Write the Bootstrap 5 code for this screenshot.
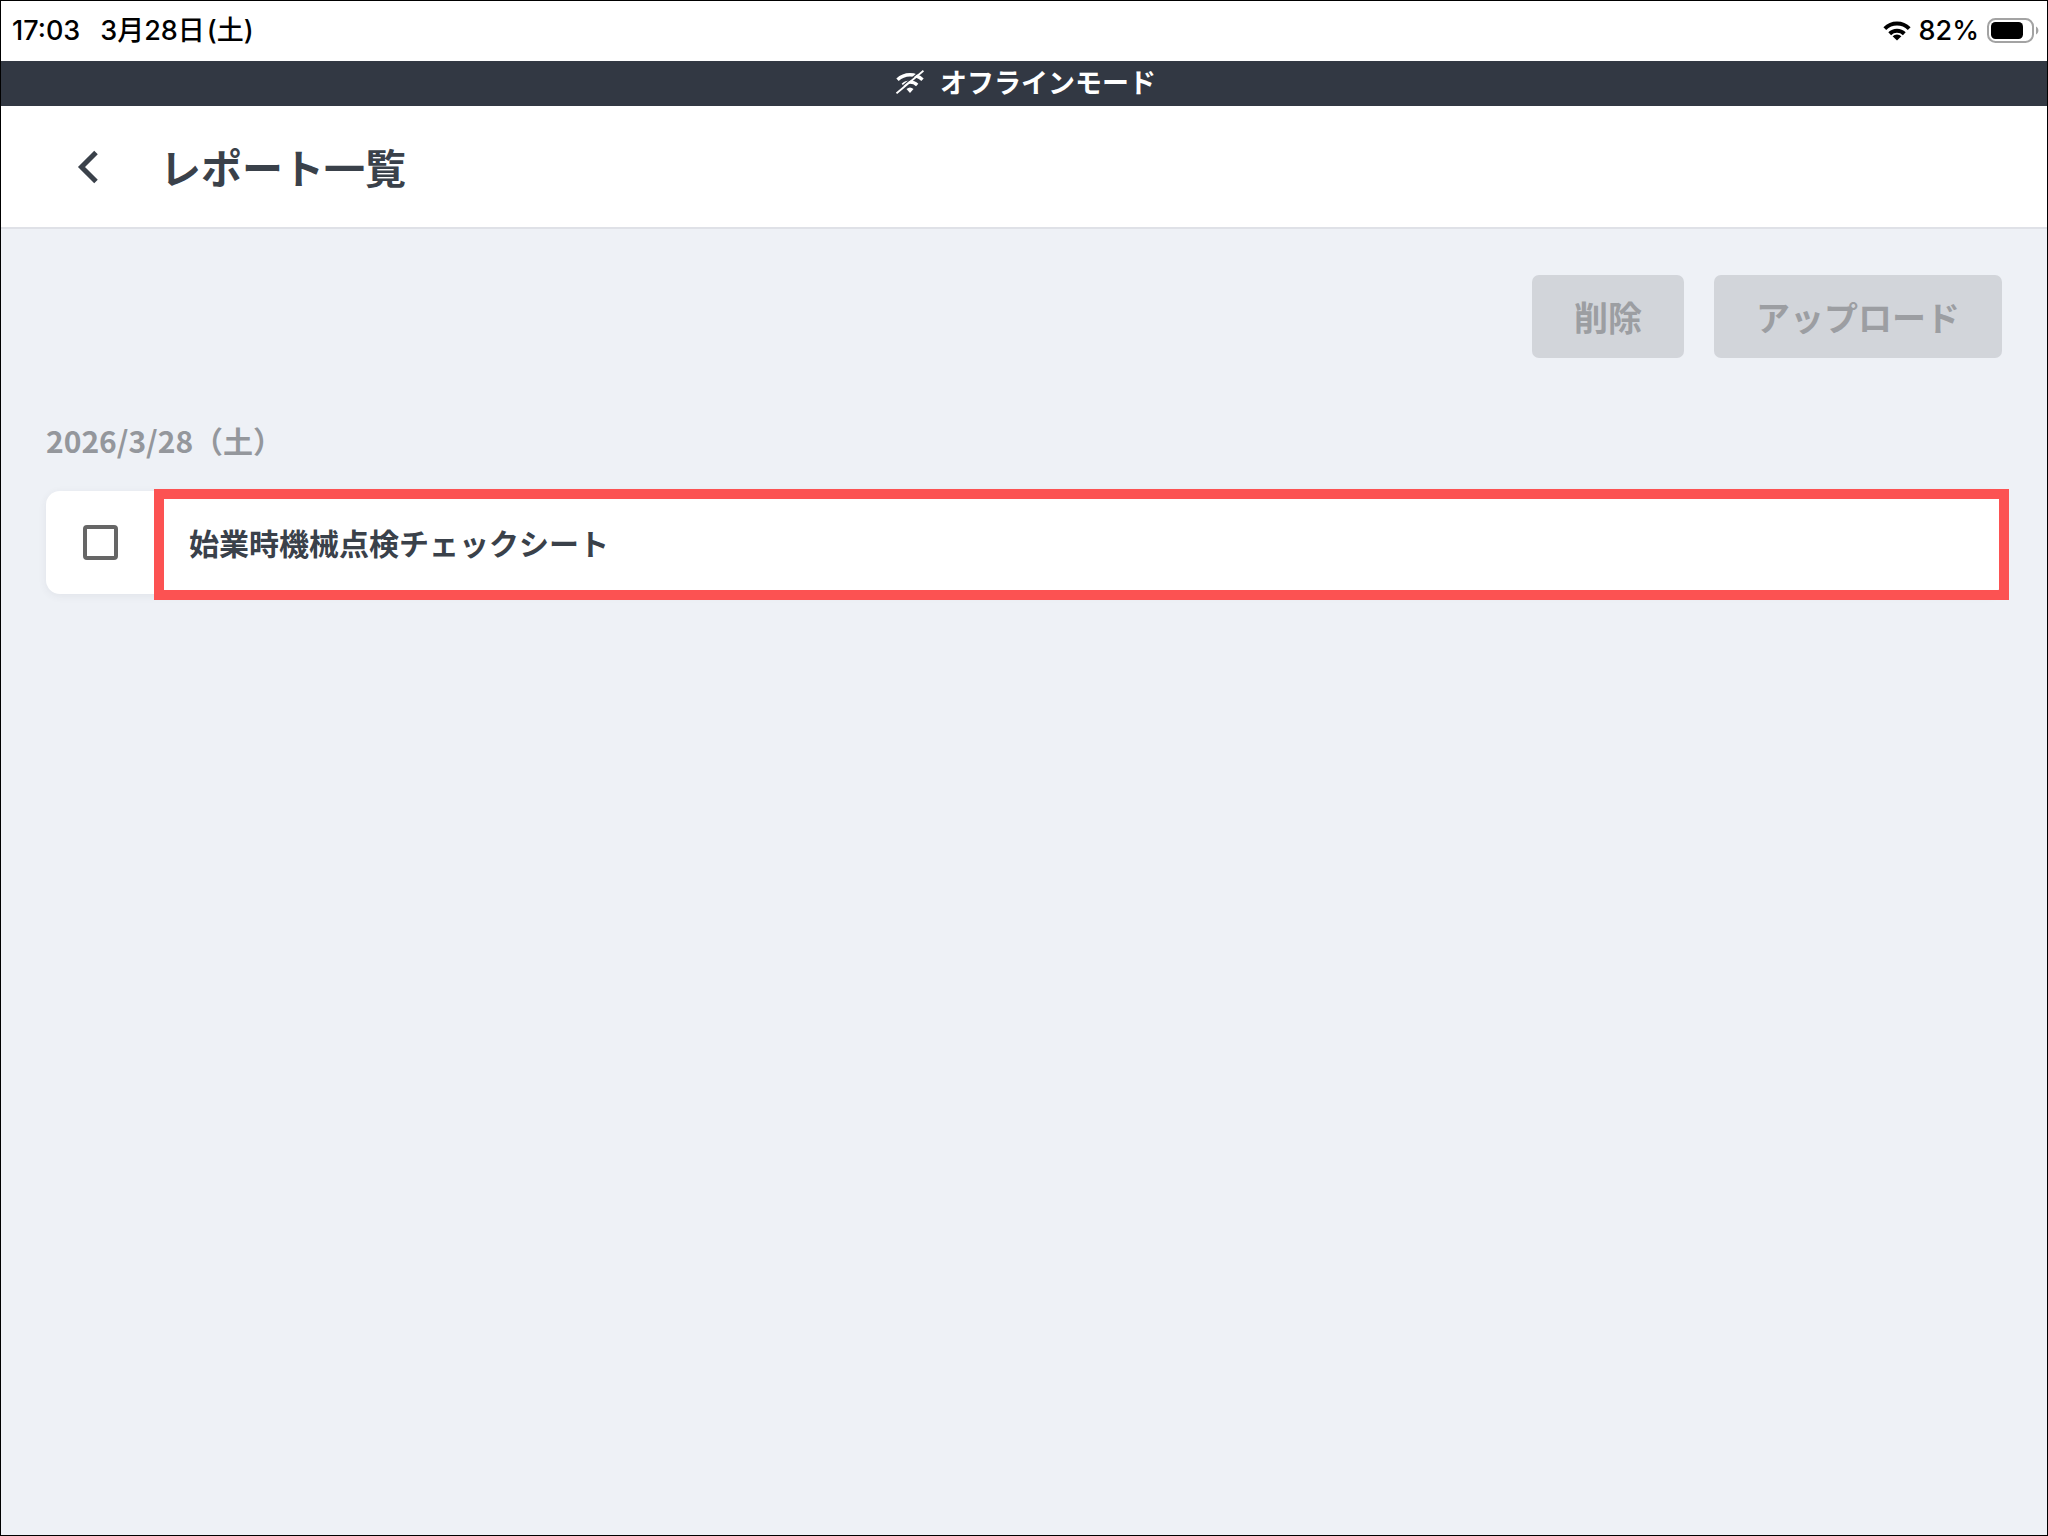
<!DOCTYPE html>
<html lang="ja">
<head>
<meta charset="utf-8">
<meta name="viewport" content="width=device-width, initial-scale=1">
<title>レポート一覧</title>
<link href="https://cdn.jsdelivr.net/npm/bootstrap@5.3.0/dist/css/bootstrap.min.css" rel="stylesheet">
<style>
  body { font-family: "Noto Sans CJK JP", sans-serif; background: #eef1f6; color: #3a414a; }
  .app-frame { border: 1px solid #000; }
  .status-bar { height: 60px; padding: 0 8px 0 11px; background: #fff; font-family: Inter, "Noto Sans CJK JP", sans-serif; font-size: 27px; font-weight: 500; line-height: 32px; color: #000; }
  .status-time { gap: 20px; }
  .status-date { gap: 2px; }
  .status-power { gap: 8px; }
  .offline-bar { height: 45px; padding: 0 0 4px 4px; gap: 16px; background: #323843; color: #fff; font-size: 27px; font-weight: 700; line-height: 40px; }
  .page-head { height: 123px; padding: 0 44px 0 63px; gap: 48px; background: #fff; border-bottom: 2px solid #dfe1e7; }
  .page-title { padding-bottom: 2px; font-size: 41px; font-weight: 700; line-height: 60px; }
  .back-btn { width: 48px; height: 48px; color: #3a414a; }
  .page-body { padding: 46px 45px; }
  .action-row { gap: 30px; }
  .btn-action { --bs-btn-padding-x: 42px; --bs-btn-padding-y: 0; --bs-btn-font-size: 34px; --bs-btn-font-weight: 700; --bs-btn-border-width: 0; --bs-btn-border-radius: 7px; --bs-btn-disabled-bg: #d2d5da; --bs-btn-disabled-color: #9c9ea2; --bs-btn-disabled-opacity: 1; height: 83px; }
  .date-label { margin: 58px 0 27px; font-size: 30px; font-weight: 700; line-height: 48px; color: #94979c; }
  .report-item { height: 103px; border-radius: 14px; background: #fff; box-shadow: 0 2px 8px rgba(50, 56, 67, .07); }
  .check-cell { width: 109px; }
  .form-check-input.report-check { width: 35px; height: 35px; border: 4px solid #666; border-radius: 4px; }
  .report-name { padding: 0 0 2px 34px; font-size: 30px; font-weight: 700; line-height: 48px; color: #3a414a; }
  .highlight-box { inset: -2px -7px -6px 108px; border: 10px solid #fc5252; pointer-events: none; }
</style>
</head>
<body>
<div class="app-frame min-vh-100">
  <div class="status-bar d-flex justify-content-between align-items-center">
    <div class="status-time d-flex"><span>17:03</span><span class="status-date d-flex"><span>3月28日</span><span>(土)</span></span></div>
    <div class="status-power d-flex align-items-center">
      <svg width="28" height="20" viewBox="0 0 28 20" fill="none" stroke="#000" stroke-width="4" aria-hidden="true">
        <path d="M1.800 7.600a17.400 17.400 0 0 1 24.400 0"/>
        <path d="M6.700 12.700a10.500 10.500 0 0 1 14.600 0"/>
        <path d="M14 19.500 9.600 15.200a6.400 6.400 0 0 1 8.800 0z" fill="#000" stroke="none"/>
      </svg>
      <span>82%</span>
      <svg width="52" height="26" viewBox="0 0 52 26" aria-hidden="true">
        <rect x="1" y="1" width="45" height="23" rx="7.500" fill="none" stroke="#a3a3a3" stroke-width="2"/>
        <rect x="4" y="4" width="32" height="17" rx="4.500" fill="#000"/>
        <path d="M49 8.500c3.200 1.400 3.200 6.600 0 8z" fill="#a3a3a3"/>
      </svg>
    </div>
  </div>

  <div class="offline-bar d-flex justify-content-center align-items-center" role="status">
    <svg width="28" height="24" viewBox="0 0 28 24" fill="none" stroke="#fff" aria-hidden="true">
      <path d="M1.500 9.800a18 18 0 0 1 25 0" stroke-width="3.400"/>
      <path d="M6.800 14.900a10.600 10.600 0 0 1 14.400 0" stroke-width="3.400"/>
      <path d="M14 23 10.500 19a5.200 5.200 0 0 1 7 0z" fill="#fff" stroke="none"/>
      <path d="M-1 22.300 26-.5" stroke="#323843" stroke-width="1.200"/>
      <path d="M.5 23.300 27.500 .8" stroke-width="1.900"/>
    </svg>
    <span>オフラインモード</span>
  </div>

  <header class="page-head d-flex align-items-center">
    <button type="button" class="back-btn btn border-0 p-0 d-flex align-items-center justify-content-center" aria-label="戻る">
      <svg width="22" height="34" viewBox="0 0 22 34" fill="none" stroke="currentColor" stroke-width="5" aria-hidden="true"><path d="M19 2.500 4.500 17 19 31.500"/></svg>
    </button>
    <h1 class="page-title mb-0">レポート一覧</h1>
  </header>

  <main class="page-body">
    <div class="action-row d-flex justify-content-end">
      <button type="button" class="btn btn-action" disabled>削除</button>
      <button type="button" class="btn btn-action" disabled>アップロード</button>
    </div>
    <h2 class="date-label">2026/3/28（土）</h2>
    <div class="report-item position-relative d-flex align-items-center">
      <div class="check-cell d-flex justify-content-center">
        <input class="form-check-input report-check m-0" type="checkbox" id="report1" aria-labelledby="report1-name">
      </div>
      <a href="#" id="report1-name" class="report-name flex-grow-1 text-decoration-none">始業時機械点検チェックシート</a>
      <div class="highlight-box position-absolute"></div>
    </div>
  </main>
</div>
<script src="https://cdn.jsdelivr.net/npm/bootstrap@5.3.0/dist/js/bootstrap.bundle.min.js"></script>
</body>
</html>
